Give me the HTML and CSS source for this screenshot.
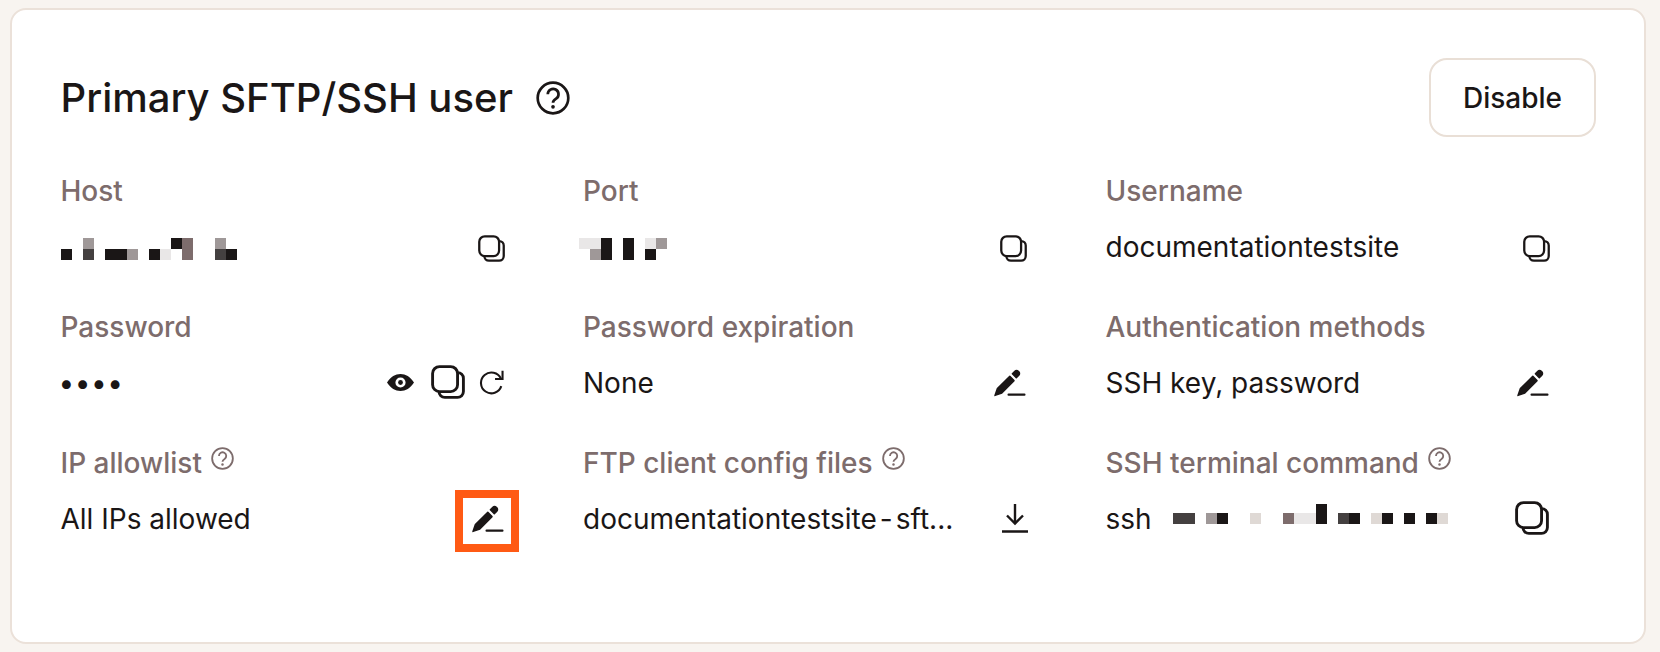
FILE: index.html
```html
<!DOCTYPE html>
<html lang="en">
<head>
<meta charset="utf-8">
<title>Primary SFTP/SSH user</title>
<link rel="stylesheet" href="styles.css">
</head>
<body>
<svg class="defs" width="0" height="0" aria-hidden="true">
  <symbol id="copy" viewBox="0 0 32 32"><rect class="ln" x="1.5" y="1.5" width="23.5" height="23.5" rx="6.5"/><path class="ln" d="M25 7.2h.2a5.3 5.3 0 0 1 5.3 5.3v12.5a5.5 5.5 0 0 1-5.5 5.5H13a5.5 5.5 0 0 1-5.5-5.5v-.2"/></symbol>
  <symbol id="pen" viewBox="0 0 34 28"><path class="sd" d="M1 26.400 3.400 19.600 15.800 7.400 20 11.600 7.800 24Z"/><path class="sd" d="M18.400 4.800 20.900 2.300a2.300 2.300 0 0 1 3.300 0l.6.600a2.300 2.300 0 0 1 0 3.300L22.300 8.700Z"/><rect class="fl" x="13.500" y="24.400" width="18" height="2.300" rx="1"/></symbol>
  <symbol id="help" viewBox="0 0 24 24"><circle class="hl" cx="12" cy="12" r="10.800"/><path class="hl" d="M8.300 9.300a3.800 3.800 0 1 1 5.900 3.200c-1.400.9-2.200 1.600-2.200 2.900"/><circle class="hd" cx="12" cy="18.200" r="1.300"/></symbol>
</svg>
<main class="card">
  <header class="head">
    <div class="title-wrap">
      <h1 class="title">Primary SFTP/SSH user</h1>
      <svg class="help-lg"><use href="#help"/></svg>
    </div>
    <button class="btn" type="button">Disable</button>
  </header>
  <section class="grid">
    <div class="cell">
      <div class="label">Host</div>
      <div class="value">
        <svg class="mosaic host" viewBox="62 238 176 22" width="176" height="22" shape-rendering="crispEdges">
          <rect class="k" x="62" y="249" width="11" height="11"/>
          <rect class="g" x="84" y="238" width="11" height="11"/><rect class="d" x="84" y="249" width="11" height="11"/>
          <rect class="k" x="106" y="249" width="22" height="11"/><rect class="g" x="128" y="249" width="11" height="11"/>
          <rect class="k" x="150" y="249" width="11" height="11"/><rect class="l" x="161" y="249" width="11" height="11"/>
          <rect class="k" x="172" y="238" width="11" height="11"/><rect class="b" x="183" y="238" width="11" height="22"/>
          <rect class="g" x="216" y="238" width="11" height="11"/><rect class="d" x="216" y="249" width="11" height="11"/><rect class="k" x="227" y="249" width="11" height="11"/>
        </svg>
        <button class="ico" type="button"><svg class="i-copy"><use href="#copy"/></svg></button>
      </div>
    </div>
    <div class="cell">
      <div class="label">Port</div>
      <div class="value">
        <svg class="mosaic port" viewBox="579 238 88 22" width="88" height="22" shape-rendering="crispEdges">
          <rect class="l" x="579" y="238" width="22" height="11"/><rect class="g" x="590" y="249" width="11" height="11"/>
          <rect class="k" x="601" y="238" width="11" height="22"/><rect class="k" x="623" y="238" width="11" height="22"/>
          <rect class="l" x="645" y="238" width="11" height="11"/><rect class="k" x="645" y="249" width="11" height="11"/><rect class="g" x="656" y="238" width="11" height="11"/>
        </svg>
        <button class="ico" type="button"><svg class="i-copy"><use href="#copy"/></svg></button>
      </div>
    </div>
    <div class="cell">
      <div class="label">Username</div>
      <div class="value">
        <span class="text">documentationtestsite</span>
        <button class="ico" type="button"><svg class="i-copy"><use href="#copy"/></svg></button>
      </div>
    </div>

    <div class="cell">
      <div class="label">Password</div>
      <div class="value">
        <span class="text dots">••••</span>
        <div class="tools">
          <button class="ico" type="button"><svg class="i-eye" viewBox="0 0 27 17"><path class="fl" fill-rule="evenodd" d="M0 8.500C3.800 2.800 8.300 0 13.500 0S23.200 2.800 27 8.500C23.200 14.200 18.700 17 13.500 17S3.800 14.200 0 8.500ZM13.500 3.400a5.100 5.100 0 1 0 0 10.200 5.100 5.100 0 0 0 0-10.200Z"/><circle class="fl" cx="13.500" cy="8.500" r="2.400"/></svg></button>
          <button class="ico" type="button"><svg class="i-copy-lg"><use href="#copy"/></svg></button>
          <button class="ico redo" type="button"><svg class="i-refresh" viewBox="0 0 24 24"><path class="ln2" d="M21 8.200A10 10 0 1 0 21.400 15.500"/><path class="ln2" d="M22.600 .8V8.600H15.400"/></svg></button>
        </div>
      </div>
    </div>
    <div class="cell">
      <div class="label">Password expiration</div>
      <div class="value">
        <span class="text">None</span>
        <button class="ico pen-btn" type="button"><svg class="i-pen"><use href="#pen"/></svg></button>
      </div>
    </div>
    <div class="cell">
      <div class="label">Authentication methods</div>
      <div class="value">
        <span class="text">SSH key, password</span>
        <button class="ico pen-btn" type="button"><svg class="i-pen"><use href="#pen"/></svg></button>
      </div>
    </div>

    <div class="cell">
      <div class="label">IP allowlist <svg class="help-sm"><use href="#help"/></svg></div>
      <div class="value">
        <span class="text">All IPs allowed</span>
        <button class="ico pen-btn marked" type="button"><svg class="i-pen"><use href="#pen"/></svg></button>
      </div>
    </div>
    <div class="cell">
      <div class="label">FTP client config files <svg class="help-sm"><use href="#help"/></svg></div>
      <div class="value">
        <span class="text">documentationtestsite<span class="dash">-</span>sft...</span>
        <button class="ico lift" type="button"><svg class="i-dl" viewBox="0 0 26 30"><path class="ln3" d="M13 1V20M5 12.500 13 20.500 21 12.500M0 28.500H26"/></svg></button>
      </div>
    </div>
    <div class="cell">
      <div class="label">SSH terminal command <svg class="help-sm"><use href="#help"/></svg></div>
      <div class="value">
        <span class="text">ssh</span>
        <svg class="mosaic ssh" viewBox="1173 504 275 20" width="275" height="20" shape-rendering="crispEdges">
          <rect class="d" x="1173" y="513" width="22" height="11"/>
          <rect class="g" x="1206" y="513" width="11" height="11"/><rect class="k" x="1217" y="513" width="11" height="11"/>
          <rect class="s" x="1250" y="513" width="11" height="11"/>
          <rect class="b" x="1283" y="513" width="11" height="11"/><rect class="l" x="1294" y="513" width="22" height="11"/>
          <rect class="k" x="1316" y="504" width="11" height="20"/>
          <rect class="d" x="1338" y="513" width="11" height="11"/><rect class="k" x="1349" y="513" width="11" height="11"/>
          <rect class="s" x="1371" y="513" width="11" height="11"/><rect class="k" x="1382" y="513" width="11" height="11"/>
          <rect class="k" x="1404" y="513" width="11" height="11"/>
          <rect class="k" x="1426" y="513" width="11" height="11"/><rect class="s" x="1437" y="513" width="11" height="11"/>
        </svg>
        <button class="ico lift inset" type="button"><svg class="i-copy-lg"><use href="#copy"/></svg></button>
      </div>
    </div>
  </section>
</main>
</body>
</html>
```

FILE: styles.css
```css
* { box-sizing: border-box; }
html, body { height: 100%; }
body {
  margin: 0;
  padding: 8px 14px 8px 10px;
  background: #f8f4f0;
  color: #1a1616;
  font-family: Inter, "Liberation Sans", sans-serif;
  overflow: hidden;
}
.defs { display: block; height: 0; }
.card {
  height: 636px;
  background: #fff;
  border: 2px solid #ebe1d9;
  border-radius: 16px;
  padding: 48px 48px 0 48.5px;
}
.head {
  display: flex;
  justify-content: space-between;
  align-items: center;
  height: 79px;
}
.title-wrap { display: flex; align-items: center; gap: 23px; }
.title { margin: 0; font-size: 40px; line-height: 48px; font-weight: 500; letter-spacing: 0; }
.help-lg { width: 34px; height: 34px; color: #1a1616; }
.btn {
  width: 167px;
  height: 79px;
  background: #fff;
  border: 2px solid #e9dfd6;
  border-radius: 18px;
  font: 500 28px/1 Inter, "Liberation Sans", sans-serif;
  color: #1a1616;
  padding: 0;
}
.grid {
  display: grid;
  grid-template-columns: repeat(3, 490px);
  column-gap: 32.5px;
  margin-top: 36px;
}
.cell { padding-right: 45px; height: 136px; }
.label {
  display: flex;
  align-items: center;
  gap: 9px;
  height: 36px;
  font-size: 28px;
  line-height: 36px;
  font-weight: 500;
  color: #7d6c6c;
}
.value {
  display: flex;
  align-items: center;
  justify-content: space-between;
  height: 46px;
  margin-top: 16px;
  font-size: 28px;
  line-height: 36px;
}
.text { white-space: nowrap; margin-top: -2px; }
.dash { margin: 0 3px; }
.dots { margin-left: -2px; letter-spacing: .5px; }
.tools { display: flex; align-items: center; gap: 17px; margin-top: -4px; }
.ico {
  position: relative;
  display: flex;
  align-items: center;
  justify-content: flex-end;
  padding: 0;
  border: 0;
  background: none;
  color: #1a1616;
}
.redo { margin-left: -3px; margin-right: 2px; }
.pen-btn { margin-top: -2px; }
.lift { margin-top: -4px; }
.inset { margin-right: 2px; }
.marked::after {
  content: "";
  box-sizing: border-box;
  position: absolute;
  top: -15px;
  right: -13px;
  width: 64px;
  height: 62px;
  border: 8px solid #ff5a14;
}
.i-copy { display: block; width: 27px; height: 27px; margin-right: 1px; }
.i-copy-lg { display: block; width: 34px; height: 34px; }
.i-pen { display: block; width: 34px; height: 28px; }
.i-eye { display: block; width: 27px; height: 17px; }
.i-refresh { display: block; width: 25px; height: 25px; }
.i-dl { display: block; width: 26px; height: 30px; }
.help-sm { width: 23px; height: 23px; color: #7d6c6c; margin-top: -9px; }
.mosaic { display: block; flex: none; margin-top: 2px; }
.port { margin-left: -4px; }
.ssh { margin-left: 21px; margin-right: auto; margin-top: -12px; }
.k { fill: #1a1616; }
.d { fill: #444040; }
.g { fill: #9f9898; }
.b { fill: #7d6c6c; }
.l { fill: #e9e7e7; }
.s { fill: #dfd9d5; }
.ln { fill: none; stroke: currentColor; stroke-width: 2.700; }
.ln2 { fill: none; stroke: currentColor; stroke-width: 2; }
.ln3 { fill: none; stroke: currentColor; stroke-width: 2.400; }
.sd { fill: currentColor; stroke: currentColor; stroke-width: 1.500; stroke-linejoin: round; }
.fl { fill: currentColor; }
.hl { fill: none; stroke: currentColor; stroke-width: 1.900; }
.hd { fill: currentColor; }
```
